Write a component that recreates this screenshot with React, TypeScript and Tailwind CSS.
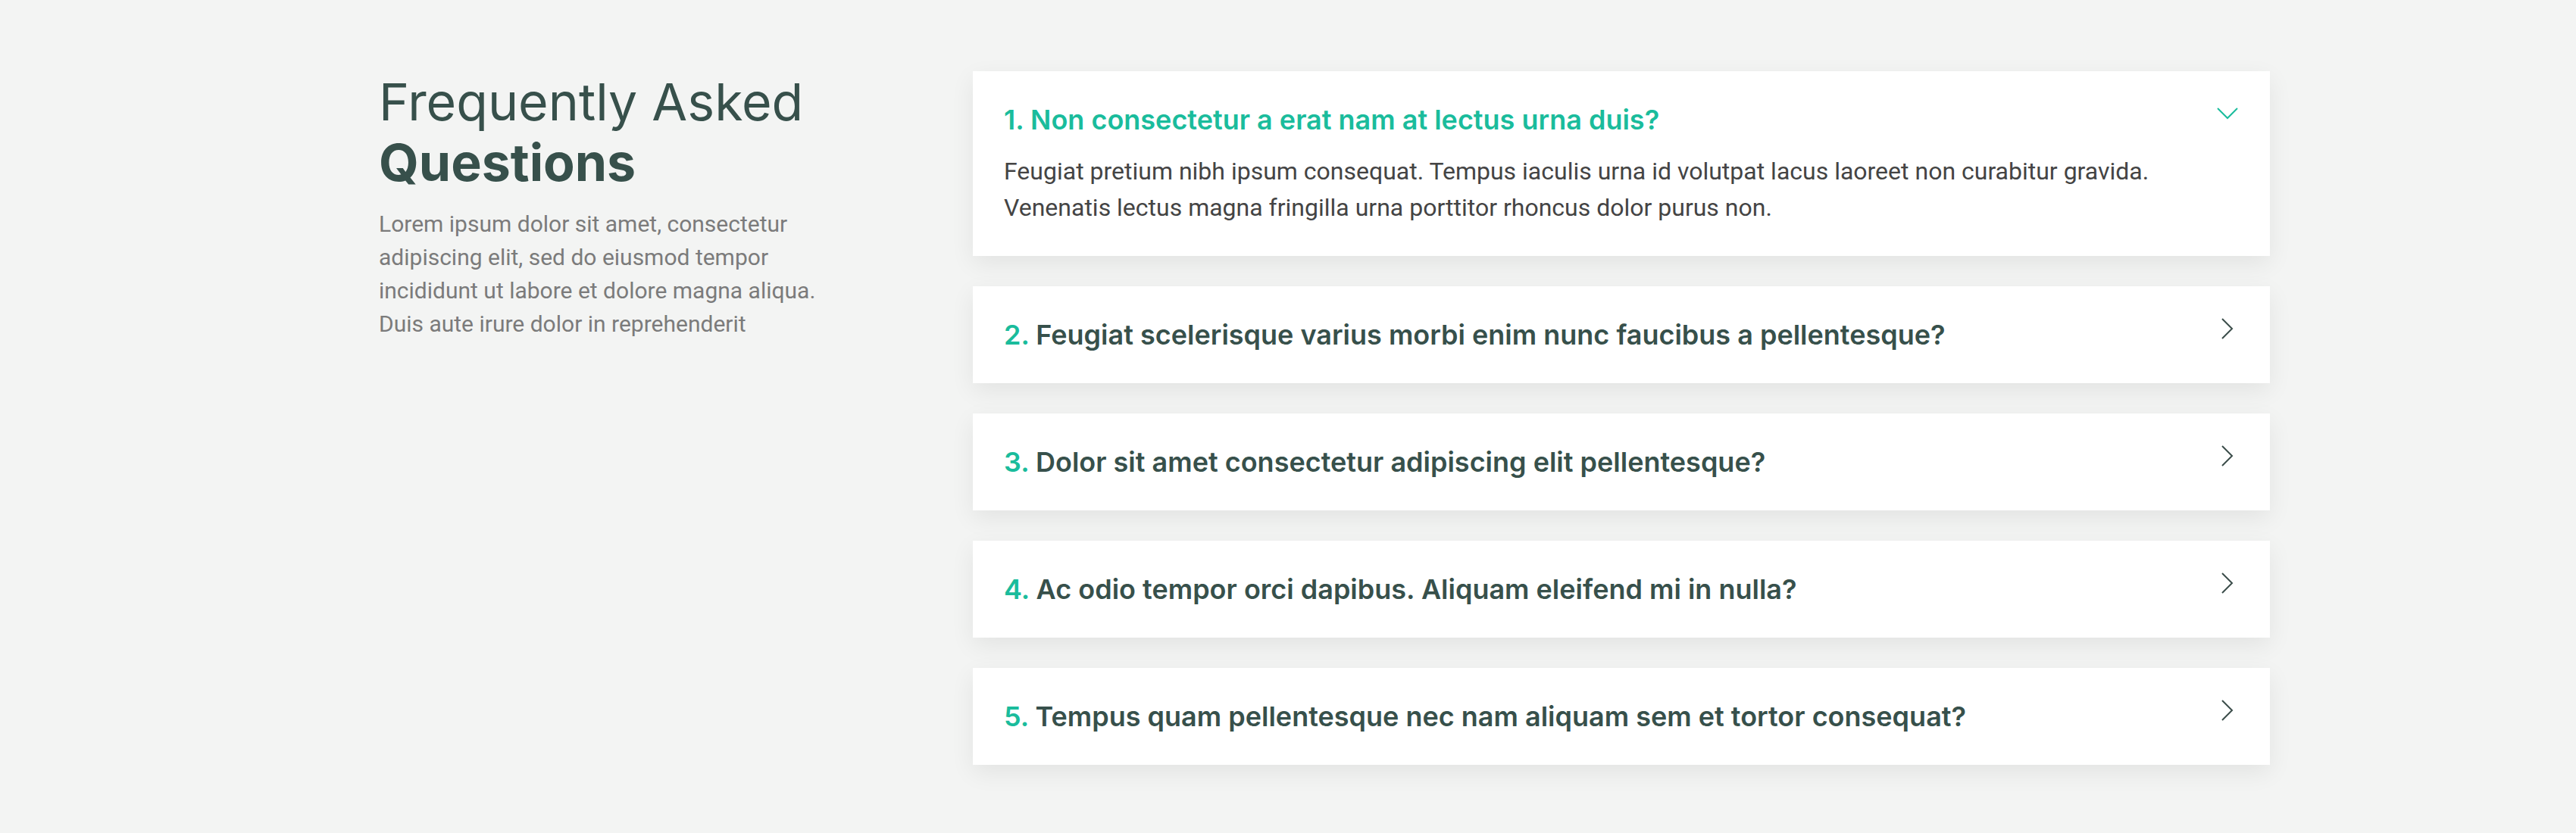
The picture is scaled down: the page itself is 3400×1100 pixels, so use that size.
import React, { useState } from "react";

const faqs = [
  {
    q: "Non consectetur a erat nam at lectus urna duis?",
    a: "Feugiat pretium nibh ipsum consequat. Tempus iaculis urna id volutpat lacus laoreet non curabitur gravida. Venenatis lectus magna fringilla urna porttitor rhoncus dolor purus non.",
  },
  {
    q: "Feugiat scelerisque varius morbi enim nunc faucibus a pellentesque?",
    a: "Dolor sit amet consectetur adipiscing elit pellentesque habitant morbi. Id interdum velit laoreet id donec ultrices.",
  },
  {
    q: "Dolor sit amet consectetur adipiscing elit pellentesque?",
    a: "Eleifend mi in nulla posuere sollicitudin aliquam ultrices sagittis orci. Faucibus pulvinar elementum integer enim.",
  },
  {
    q: "Ac odio tempor orci dapibus. Aliquam eleifend mi in nulla?",
    a: "Dolor sit amet consectetur adipiscing elit pellentesque habitant morbi. Id interdum velit laoreet id donec ultrices.",
  },
  {
    q: "Tempus quam pellentesque nec nam aliquam sem et tortor consequat?",
    a: "Molestie a iaculis at erat pellentesque adipiscing commodo. Dignissim suspendisse in est ante in.",
  },
];

const ChevronDown = () => (
  <svg width="32" height="32" viewBox="0 0 32 32" fill="none" stroke="#1abc9c" strokeWidth="2">
    <polyline points="3,9 16,22 29,9" />
  </svg>
);

const ChevronRight = () => (
  <svg width="32" height="32" viewBox="0 0 32 32" fill="none" stroke="#3b4d4a" strokeWidth="2">
    <polyline points="9,3 22,16 9,29" />
  </svg>
);

export default function App() {
  const [open, setOpen] = useState(0);

  return (
    <div className="min-h-screen bg-[#f3f4f3] font-['Roboto',sans-serif]">
      <div className="mx-auto flex w-[2592px] pt-[94px] pb-[90px]">
        <div className="w-[880px] shrink-0 pl-[96px]">
          <h2 className="font-['Inter',sans-serif] text-[68px] leading-[80px] font-normal text-[#37504b]">
            Frequently Asked
            <br />
            <span className="font-bold">Questions</span>
          </h2>
          <p className="mt-[20px] w-[580px] text-[30px] leading-[44px] text-[#7b7b7b]">
            Lorem ipsum dolor sit amet, consectetur adipiscing elit, sed do eiusmod tempor incididunt ut labore et
            dolore magna aliqua. Duis aute irure dolor in reprehenderit
          </p>
        </div>

        <div className="flex flex-1 flex-col gap-[40px]">
          {faqs.map((item, i) => {
            const isOpen = open === i;
            return (
              <div
                key={i}
                className="bg-white px-[41px] py-[40px] shadow-[0_10px_30px_rgba(0,0,0,0.07)]"
              >
                <button
                  type="button"
                  onClick={() => setOpen(isOpen ? -1 : i)}
                  className="flex w-full items-start justify-between text-left"
                >
                  <span
                    className={`font-['Inter',sans-serif] text-[36px] leading-[48px] font-semibold ${
                      isOpen ? "text-[#1abc9c]" : "text-[#37504b]"
                    }`}
                  >
                    <span className="text-[#1abc9c]">{i + 1}.</span> {item.q}
                  </span>
                  <span className="mr-[-1px] flex h-[32px] w-[32px] shrink-0 items-center justify-center">
                    {isOpen ? <ChevronDown /> : <ChevronRight />}
                  </span>
                </button>
                {isOpen && (
                  <p className="mt-[20px] max-w-[1560px] text-[32px] leading-[48px] text-[#444444]">{item.a}</p>
                )}
              </div>
            );
          })}
        </div>
      </div>
    </div>
  );
}
